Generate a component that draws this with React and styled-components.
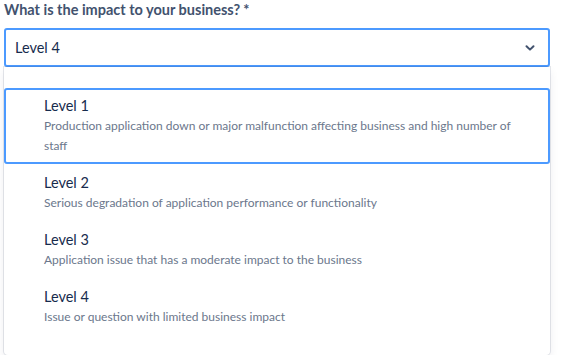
import React from 'react'
import styled, { createGlobalStyle } from 'styled-components'

const Global = createGlobalStyle`
  body {
    margin: 0;
    background: #fff;
    font-family: Lato, "Liberation Sans", Arial, sans-serif;
  }
`

const Page = styled.div`
  width: 546px;
  padding: 0 0 0 4px;
`
const Label = styled.label`
  display: block;
  font-size: 14.5px;
  line-height: 20px;
  font-weight: 700;
  color: #42526e;
  margin-bottom: 8px;
`
const Star = styled.span`
  margin-left: 3px;
`
const Control = styled.div`
  box-sizing: border-box;
  height: 39px;
  display: flex;
  align-items: center;
  justify-content: space-between;
  border: 2px solid #4c9aff;
  border-radius: 3px;
  padding: 0 13px 0 9px;
  background: #fff;
`
const Value = styled.span`
  font-size: 14.5px;
  color: #172b4d;
`
const Menu = styled.div`
  padding: 21px 0 19px;
  border-radius: 0 0 4px 4px;
  background: #fff;
  box-shadow: 0 0 0 1px rgba(9, 30, 66, 0.1), 0 4px 10px rgba(9, 30, 66, 0.08);
`
const Option = styled.div`
  box-sizing: border-box;
  padding: 6px 30px 6px 38px;
  border: 2px solid ${p => (p.$active ? '#4c9aff' : 'transparent')};
  border-radius: 3px;
  margin: 0 0 1px;
`
const Title = styled.div`
  font-size: 14.5px;
  line-height: 20px;
  color: #172b4d;
`
const Desc = styled.div`
  font-size: 12px;
  line-height: 20px;
  color: #6b778c;
`

const options = [
  { title: 'Level 1', desc: 'Production application down or major malfunction affecting business and high number of staff' },
  { title: 'Level 2', desc: 'Serious degradation of application performance or functionality' },
  { title: 'Level 3', desc: 'Application issue that has a moderate impact to the business' },
  { title: 'Level 4', desc: 'Issue or question with limited business impact' },
]

function Chevron() {
  return (
    <svg width="10" height="8" viewBox="0 0 10 8">
      <path d="M1.5 2.2 L5 5.6 L8.5 2.2" fill="none" stroke="#42526e" strokeWidth="2" strokeLinecap="round" strokeLinejoin="round" />
    </svg>
  )
}

export default function App() {
  return (
    <Page>
      <Global />
      <Label>What is the impact to your business?<Star>*</Star></Label>
      <Control>
        <Value>Level 4</Value>
        <Chevron />
      </Control>
      <Menu>
        {options.map((o, i) => (
          <Option key={o.title} $active={i === 0}>
            <Title>{o.title}</Title>
            <Desc>{o.desc}</Desc>
          </Option>
        ))}
      </Menu>
    </Page>
  )
}
